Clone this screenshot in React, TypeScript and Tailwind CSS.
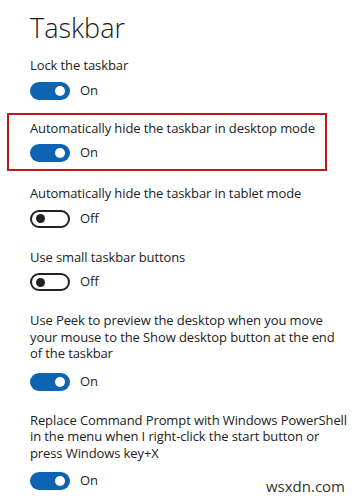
import React from "react";

type Setting = {
  label: string;
  on: boolean;
  highlight?: boolean;
  multi?: boolean;
  width?: string;
};

const settings: Setting[] = [
  { label: "Lock the taskbar", on: true },
  { label: "Automatically hide the taskbar in desktop mode", on: true, highlight: true },
  { label: "Automatically hide the taskbar in tablet mode", on: false },
  { label: "Use small taskbar buttons", on: false },
  {
    label:
      "Use Peek to preview the desktop when you move your mouse to the Show desktop button at the end of the taskbar",
    on: true,
    multi: true,
    width: "w-[310px]",
  },
  {
    label:
      "Replace Command Prompt with Windows PowerShell in the menu when I right-click the start button or press Windows key+X",
    on: true,
    multi: true,
    width: "w-[324px]",
  },
];

function Toggle({ on }: { on: boolean }) {
  if (on) {
    return (
      <span className="flex h-[18px] w-[40px] items-center justify-end rounded-full bg-[#0f63b3] pr-[5px]">
        <span className="h-[10px] w-[10px] rounded-full bg-white" />
      </span>
    );
  }
  return (
    <span className="flex h-[18px] w-[40px] items-center rounded-full border-2 border-[#222] pl-[4px]">
      <span className="h-[9px] w-[9px] rounded-full bg-[#222]" />
    </span>
  );
}

function Item({ s }: { s: Setting }) {
  return (
    <div
      className={
        s.highlight
          ? "-ml-[23px] w-[320px] border-2 border-[#c8161d] pl-[21px] pt-[5px] pb-[6px]"
          : s.width ?? "w-[310px]"
      }
    >
      <p className="text-[13px] leading-[16.5px] tracking-[-0.1px] text-[#222]">{s.label}</p>
      <div className={(s.multi ? "mt-[10px]" : "mt-[7px]") + " flex h-[20px] items-center gap-[10px]"}>
        <Toggle on={s.on} />
        <span className="text-[13px] text-[#222]">{s.on ? "On" : "Off"}</span>
      </div>
    </div>
  );
}

export default function App() {
  return (
    <div className="relative h-[500px] w-[359px] overflow-hidden bg-white pl-[30px] pt-[12px] font-['Open_Sans',sans-serif]">
      <h1 className="text-[27px] font-light leading-[32px] text-[#1a1a1a]">Taskbar</h1>

      <div className="mt-[13px] flex flex-col">
        {settings.map((s, i) => (
          <div
            key={i}
            className={
              i === 0
                ? ""
                : s.highlight
                  ? "mt-[12px]"
                  : settings[i - 1].highlight
                    ? "mt-[14px]"
                    : "mt-[20px]"
            }
          >
            <Item s={s} />
          </div>
        ))}
      </div>

      {/* watermark */}
      <span className="absolute bottom-[3px] right-[12px] bg-white/70 px-[2px] text-[15px] text-[#333]">
        wsxdn.com
      </span>
    </div>
  );
}
